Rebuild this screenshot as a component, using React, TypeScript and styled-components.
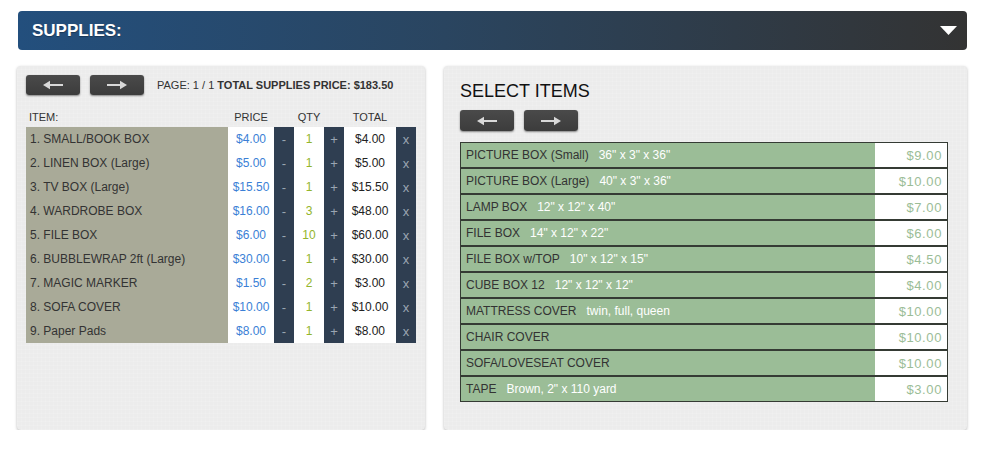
import styled, { createGlobalStyle } from 'styled-components';

const GlobalStyle = createGlobalStyle`
  body {
    margin: 0;
    background: #fff;
    font-family: 'Liberation Sans', Arial, sans-serif;
  }
`;

type Supply = { name: string; price: string; qty: number; total: string };
type Item = { name: string; detail?: string; price: string };

const supplies: Supply[] = [
  { name: '1. SMALL/BOOK BOX', price: '$4.00', qty: 1, total: '$4.00' },
  { name: '2. LINEN BOX (Large)', price: '$5.00', qty: 1, total: '$5.00' },
  { name: '3. TV BOX (Large)', price: '$15.50', qty: 1, total: '$15.50' },
  { name: '4. WARDROBE BOX', price: '$16.00', qty: 3, total: '$48.00' },
  { name: '5. FILE BOX', price: '$6.00', qty: 10, total: '$60.00' },
  { name: '6. BUBBLEWRAP 2ft (Large)', price: '$30.00', qty: 1, total: '$30.00' },
  { name: '7. MAGIC MARKER', price: '$1.50', qty: 2, total: '$3.00' },
  { name: '8. SOFA COVER', price: '$10.00', qty: 1, total: '$10.00' },
  { name: '9. Paper Pads', price: '$8.00', qty: 1, total: '$8.00' },
];

const items: Item[] = [
  { name: 'PICTURE BOX (Small)', detail: '36" x 3" x 36"', price: '$9.00' },
  { name: 'PICTURE BOX (Large)', detail: '40" x 3" x 36"', price: '$10.00' },
  { name: 'LAMP BOX', detail: '12" x 12" x 40"', price: '$7.00' },
  { name: 'FILE BOX', detail: '14" x 12" x 22"', price: '$6.00' },
  { name: 'FILE BOX w/TOP', detail: '10" x 12" x 15"', price: '$4.50' },
  { name: 'CUBE BOX 12', detail: '12" x 12" x 12"', price: '$4.00' },
  { name: 'MATTRESS COVER', detail: 'twin, full, queen', price: '$10.00' },
  { name: 'CHAIR COVER', price: '$10.00' },
  { name: 'SOFA/LOVESEAT COVER', price: '$10.00' },
  { name: 'TAPE', detail: 'Brown, 2" x 110 yard', price: '$3.00' },
];

const Page = styled.div`
  padding: 11px 16px 0 17px;
  width: 950px;
`;

const Header = styled.div`
  margin-left: 1px;
  height: 39px;
  border-radius: 4px;
  background: linear-gradient(to right, #234f7d 0%, #2a4560 45%, #333333 100%);
  display: flex;
  align-items: center;
  justify-content: space-between;
  padding: 0 10px 0 14px;
`;

const HeaderTitle = styled.h2`
  margin: 0;
  color: #fff;
  font-size: 17px;
  font-weight: bold;
  text-shadow: 0 1px 1px rgba(0, 0, 0, 0.3);
`;

const Panels = styled.div`
  display: flex;
  gap: 19px;
  margin-top: 16px;
`;

const Panel = styled.div<{ $width?: number; $pad: string }>`
  ${({ $width }) => ($width ? `width: ${$width}px;` : 'flex: 1;')}
  height: 364px;
  box-sizing: border-box;
  padding: ${({ $pad }) => $pad};
  border-radius: 4px;
  background-color: #ececec;
  background-image: repeating-linear-gradient(
      0deg,
      rgba(255, 255, 255, 0.1) 0 1px,
      transparent 1px 4px
    ),
    repeating-linear-gradient(90deg, rgba(255, 255, 255, 0.1) 0 1px, transparent 1px 4px);
  box-shadow: 0 1px 3px rgba(0, 0, 0, 0.28);
`;

const Toolbar = styled.div`
  display: flex;
  align-items: center;
  gap: 10px;
`;

const NavButton = styled.button<{ $h: number }>`
  width: 54px;
  height: ${({ $h }) => $h}px;
  border: none;
  border-radius: 3px;
  padding: 0;
  background: linear-gradient(#4a4a4a, #3c3c3c);
  box-shadow: 0 1px 2px rgba(0, 0, 0, 0.45);
  display: flex;
  align-items: center;
  justify-content: center;
  cursor: pointer;
`;

const PageInfo = styled.span`
  margin-left: 3px;
  font-size: 11px;
  color: #333;

  b {
    font-weight: bold;
  }
`;

const cols = '202px 46px 20px 30px 20px 52px 20px';

const HeadRow = styled.div`
  display: grid;
  grid-template-columns: ${cols};
  height: 21px;
  margin-top: 11px;
  align-items: center;
  font-size: 11px;
  color: #333;
`;

const HeadCell = styled.div<{ $span?: number; $left?: boolean }>`
  grid-column: span ${({ $span }) => $span ?? 1};
  text-align: ${({ $left }) => ($left ? 'left' : 'center')};
  padding-left: ${({ $left }) => ($left ? '3px' : '0')};
`;

const SupplyRow = styled.div`
  display: grid;
  grid-template-columns: ${cols};
  height: 24px;
  font-size: 12px;
`;

const Cell = styled.div<{ $kind: 'item' | 'price' | 'ctrl' | 'qty' | 'total' }>`
  display: flex;
  align-items: center;
  justify-content: ${({ $kind }) => ($kind === 'item' ? 'flex-start' : 'center')};
  padding-left: ${({ $kind }) => ($kind === 'item' ? '4px' : '0')};
  background: ${({ $kind }) =>
    $kind === 'item' ? '#a9aa98' : $kind === 'ctrl' ? '#2f3e51' : '#fff'};
  color: ${({ $kind }) =>
    ({ item: '#333', price: '#3b7fd6', ctrl: '#9aa5b2', qty: '#93b52c', total: '#222' })[$kind]};
  font-size: ${({ $kind }) => ($kind === 'ctrl' ? '13px' : '12px')};
`;

const SelectTitle = styled.h3`
  margin: 0 0 8px 0;
  font-size: 18px;
  font-weight: normal;
  color: #111;
  line-height: 21px;
`;

const ItemList = styled.div`
  margin-top: 11px;
  display: flex;
  flex-direction: column;
`;

const ItemRow = styled.div`
  display: grid;
  grid-template-columns: 1fr 72px;
  height: 26px;
  box-sizing: border-box;
  border: 1px solid #353b34;
  font-size: 12px;
`;

const ItemName = styled.div`
  display: flex;
  align-items: center;
  gap: 10px;
  padding-left: 5px;
  background: #9bbd97;
  color: #333;
`;

const ItemDetail = styled.span`
  color: #fff;
`;

const ItemPrice = styled.div`
  display: flex;
  align-items: center;
  justify-content: flex-end;
  padding-right: 5px;
  background: #fff;
  color: #9bbd97;
  font-size: 13px;
  letter-spacing: 0.6px;
`;

function Arrow({ dir }: { dir: 'left' | 'right' }) {
  return (
    <svg
      width="20"
      height="10"
      viewBox="0 0 20 10"
      style={{ transform: dir === 'right' ? 'scaleX(-1)' : undefined }}
    >
      <rect x="6" y="4" width="14" height="2" fill="#d8d8d8" />
      <polygon points="0,5 7,0.8 7,9.2" fill="#d8d8d8" />
    </svg>
  );
}

export default function App() {
  return (
    <>
      <GlobalStyle />
      <Page>
        <Header>
          <HeaderTitle>SUPPLIES:</HeaderTitle>
          <svg width="17" height="9" viewBox="0 0 17 9">
            <polygon points="0,0 17,0 8.5,9" fill="#fff" />
          </svg>
        </Header>

        <Panels>
          <Panel $width={408} $pad="9px">
            <Toolbar>
              <NavButton $h={20}>
                <Arrow dir="left" />
              </NavButton>
              <NavButton $h={20}>
                <Arrow dir="right" />
              </NavButton>
              <PageInfo>
                PAGE: 1 / 1 <b>TOTAL SUPPLIES PRICE: $183.50</b>
              </PageInfo>
            </Toolbar>

            <HeadRow>
              <HeadCell $left>ITEM:</HeadCell>
              <HeadCell>PRICE</HeadCell>
              <HeadCell $span={3}>QTY</HeadCell>
              <HeadCell>TOTAL</HeadCell>
              <HeadCell />
            </HeadRow>

            {supplies.map((s) => (
              <SupplyRow key={s.name}>
                <Cell $kind="item">{s.name}</Cell>
                <Cell $kind="price">{s.price}</Cell>
                <Cell $kind="ctrl">-</Cell>
                <Cell $kind="qty">{s.qty}</Cell>
                <Cell $kind="ctrl">+</Cell>
                <Cell $kind="total">{s.total}</Cell>
                <Cell $kind="ctrl">x</Cell>
              </SupplyRow>
            ))}
          </Panel>

          <Panel $pad="15px 19px 0 16px">
            <SelectTitle>SELECT ITEMS</SelectTitle>
            <Toolbar>
              <NavButton $h={21}>
                <Arrow dir="left" />
              </NavButton>
              <NavButton $h={21}>
                <Arrow dir="right" />
              </NavButton>
            </Toolbar>

            <ItemList>
              {items.map((it) => (
                <ItemRow key={it.name}>
                  <ItemName>
                    {it.name}
                    {it.detail && <ItemDetail>{it.detail}</ItemDetail>}
                  </ItemName>
                  <ItemPrice>{it.price}</ItemPrice>
                </ItemRow>
              ))}
            </ItemList>
          </Panel>
        </Panels>
      </Page>
    </>
  );
}
